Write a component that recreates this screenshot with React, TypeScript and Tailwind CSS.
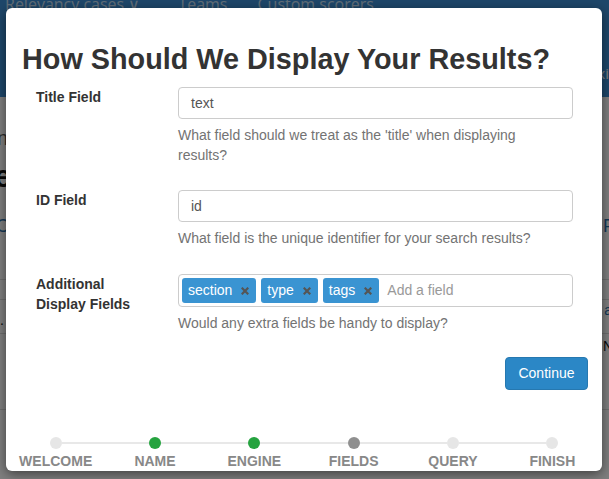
import React from "react";

const steps = [
  { name: "WELCOME", dot: "bg-[#e6e6e6]" },
  { name: "NAME", dot: "bg-[#25a33f]" },
  { name: "ENGINE", dot: "bg-[#25a33f]" },
  { name: "FIELDS", dot: "bg-[#8f8f8f]" },
  { name: "QUERY", dot: "bg-[#e6e6e6]" },
  { name: "FINISH", dot: "bg-[#e6e6e6]" },
];

function Tag({ label }: { label: string }) {
  return (
    <span className="flex h-[25px] items-center gap-[9px] rounded-[3px] bg-[#3a94d2] pl-[6px] pr-[7px] text-[14px] text-white">
      {label}
      <svg width="8" height="8" viewBox="0 0 8 8" className="mt-[1px]">
        <path d="M1.5 1.5 L6.5 6.5 M6.5 1.5 L1.5 6.5" stroke="#555" strokeWidth="2.2" strokeLinecap="square" />
      </svg>
    </span>
  );
}

function Row({ label, children, help }: { label: React.ReactNode; children: React.ReactNode; help: React.ReactNode }) {
  return (
    <div className="flex">
      <div className="w-[172px] shrink-0 pl-[30px] text-[14px] font-bold leading-[20px] text-[#333]">{label}</div>
      <div className="flex-1">
        {children}
        <p className="mt-[6px] text-[14px] leading-[20px] text-[#737373]">{help}</p>
      </div>
    </div>
  );
}

export default function App() {
  return (
    <div className="relative h-[479px] w-[609px] overflow-hidden bg-white font-['Liberation_Sans',Arial,sans-serif]">
      {/* page behind the dialog */}
      <nav className="flex h-[97px] flex-col bg-[#3c8fd4] font-['Open_Sans',sans-serif] text-[16px] text-white/70">
        <div className="-mt-[8px] flex gap-[30px] pl-[5px]">
          <span>Relevancy cases ∨</span>
          <span className="ml-[8px]">Teams</span>
          <span>Custom scorers</span>
        </div>
        <div className="mt-[46px] self-end text-[15px] text-white">Exi</div>
      </nav>
      <div className="flex flex-col text-[#111]">
        <div className="mt-[26px] flex h-[24px] justify-between">
          <span className="-ml-[3px] text-[20px] text-[#555]">n</span>
        </div>
        <div className="mt-[12px] flex h-[34px]">
          <span className="-ml-[6px] text-[32px] font-bold leading-[34px]">e</span>
        </div>
        <div className="mt-[20px] flex h-[24px] justify-between text-[18px] text-[#2a6faa]">
          <span className="-ml-[4px]">C</span>
          <span className="-mr-[6px]">P</span>
        </div>
        <div className="mt-[42px] h-px bg-[#ddd]" />
        <div className="mt-[19px] h-px bg-[#ddd]" />
        <div className="flex h-[33px] justify-between text-[14px]">
          <span className="pt-[10px]">.</span>
          <span className="-mr-[3px] text-[#2a6faa]">a</span>
        </div>
        <div className="h-px bg-[#ddd]" />
        <div className="flex h-[75px] justify-end text-[14px]">
          <span className="-mr-[4px] pt-[2px]">N</span>
        </div>
        <div className="h-px bg-[#ddd]" />
      </div>

      {/* overlay + dialog */}
      <div className="absolute inset-0 bg-black/50" />
      <div className="absolute left-[6px] top-[8px] flex h-[463px] w-[596px] flex-col rounded-[6px] bg-white shadow-[0_3px_12px_rgba(0,0,0,0.5)]">
        <h1 className="pl-[16px] pt-[35px] text-[28.8px] font-bold leading-[33px] text-[#333]">
          How Should We Display Your Results?
        </h1>
        <div className="mt-[11px] flex flex-col pr-[29px]">
          <Row label="Title Field" help={<>What field should we treat as the 'title' when displaying<br />results?</>}>
            <div className="flex h-[32px] items-center rounded-[4px] border border-[#ccc] px-[12px] text-[14px] text-[#555]">text</div>
          </Row>
          <div className="h-[25px]" />
          <Row label="ID Field" help="What field is the unique identifier for your search results?">
            <div className="flex h-[32px] items-center rounded-[4px] border border-[#ccc] px-[12px] text-[14px] text-[#555]">id</div>
          </Row>
          <div className="h-[26px]" />
          <Row label={<>Additional<br />Display Fields</>} help="Would any extra fields be handy to display?">
            <div className="flex h-[33px] items-center gap-[5px] rounded-[4px] border border-[#ccc] px-[3px] text-[14px]">
              <Tag label="section" />
              <Tag label="type" />
              <Tag label="tags" />
              <span className="ml-[3px] text-[#999]">Add a field</span>
            </div>
          </Row>
        </div>
        <div className="mt-[24px] flex justify-end pr-[14px]">
          <button className="h-[33px] w-[83px] rounded-[4px] border border-[#2678b0] bg-[#2b87c6] text-[14px] text-white">
            Continue
          </button>
        </div>
        <div className="mt-auto grid grid-cols-6">
          {steps.map((s, i) => (
            <div key={s.name} className="flex flex-col items-center">
              <div className="flex w-full items-center">
                <span className={`h-[2px] flex-1 ${i === 0 ? "bg-transparent" : "bg-[#e8e8e8]"}`} />
                <span className={`h-[12px] w-[12px] rounded-full ${s.dot}`} />
                <span className={`h-[2px] flex-1 ${i === steps.length - 1 ? "bg-transparent" : "bg-[#e8e8e8]"}`} />
              </div>
              <span className="mt-[2px] text-[14px] font-bold leading-[20px] text-[#888]">{s.name}</span>
            </div>
          ))}
        </div>
      </div>
    </div>
  );
}
